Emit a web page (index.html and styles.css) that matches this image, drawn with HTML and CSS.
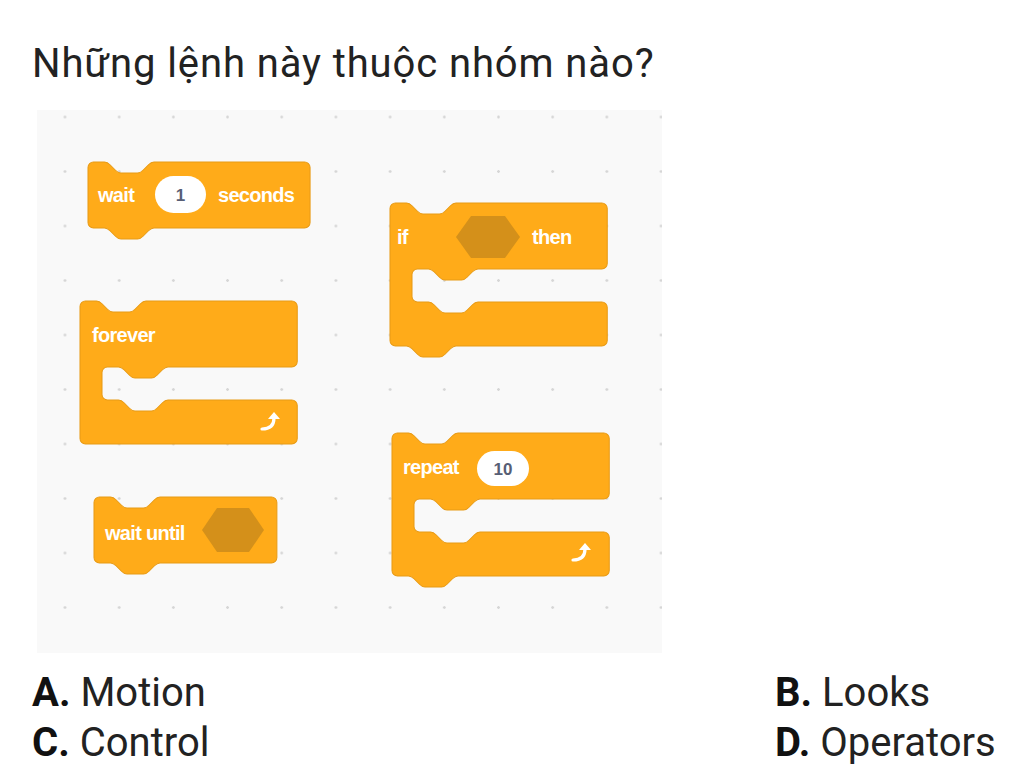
FILE: index.html
```html
<!DOCTYPE html>
<html lang="vi">
<head>
    <meta charset="utf-8" />
    <meta name="viewport" content="width=device-width, initial-scale=1.0" />
    <title>Câu hỏi Scratch</title>
    <link rel="stylesheet" href="styles.css">
</head>
<body>
    <main class="quiz">
        <h1 class="question">Những lệnh này thuộc nhóm nào?</h1>

        <!-- vùng lập trình với các khối lệnh -->
        <div class="workspace">
            <svg class="blocks" width="625" height="543" viewBox="0 0 625 543">
                <!-- wait 1 seconds -->
                <path class="block" transform="translate(51,52) scale(1.375)" d="M0,4 A4,4 0 0 1 4,0 H12 c2,0 3,1 4,2 l4,4 c1,1 2,2 4,2 h12 c2,0 3,-1 4,-2 l4,-4 c1,-1 2,-2 4,-2 H157.5 a4,4 0 0 1 4,4 V44 a4,4 0 0 1 -4,4 H48 c-2,0 -3,1 -4,2 l-4,4 c-1,1 -2,2 -4,2 h-12 c-2,0 -3,-1 -4,-2 l-4,-4 c-1,-1 -2,-2 -4,-2 H4 a4,4 0 0 1 -4,-4 Z" />
                <text class="label" x="61" y="92">wait</text>
                <rect class="input" x="118" y="66" width="51" height="37" rx="18.5" />
                <text class="value" x="143.5" y="91">1</text>
                <text class="label" x="181" y="92">seconds</text>

                <!-- if then -->
                <path class="block" transform="translate(353,93) scale(1.375)" d="M0,4 A4,4 0 0 1 4,0 H12 c2,0 3,1 4,2 l4,4 c1,1 2,2 4,2 h12 c2,0 3,-1 4,-2 l4,-4 c1,-1 2,-2 4,-2 H154 a4,4 0 0 1 4,4 V44 a4,4 0 0 1 -4,4 H64 c-2,0 -3,1 -4,2 l-4,4 c-1,1 -2,2 -4,2 h-12 c-2,0 -3,-1 -4,-2 l-4,-4 c-1,-1 -2,-2 -4,-2 H20 a4,4 0 0 0 -4,4 V68 a4,4 0 0 0 4,4 H28 c2,0 3,1 4,2 l4,4 c1,1 2,2 4,2 h12 c2,0 3,-1 4,-2 l4,-4 c1,-1 2,-2 4,-2 H154 a4,4 0 0 1 4,4 V100 a4,4 0 0 1 -4,4 H48 c-2,0 -3,1 -4,2 l-4,4 c-1,1 -2,2 -4,2 h-12 c-2,0 -3,-1 -4,-2 l-4,-4 c-1,-1 -2,-2 -4,-2 H4 a4,4 0 0 1 -4,-4 Z" />
                <text class="label" x="360" y="134">if</text>
                <polygon class="slot" points="419,127 434,106 468,106 483,127 468,148 434,148" />
                <text class="label" x="495" y="134">then</text>

                <!-- forever -->
                <path class="block" transform="translate(43,191) scale(1.375)" d="M0,4 A4,4 0 0 1 4,0 H12 c2,0 3,1 4,2 l4,4 c1,1 2,2 4,2 h12 c2,0 3,-1 4,-2 l4,-4 c1,-1 2,-2 4,-2 H154 a4,4 0 0 1 4,4 V44 a4,4 0 0 1 -4,4 H64 c-2,0 -3,1 -4,2 l-4,4 c-1,1 -2,2 -4,2 h-12 c-2,0 -3,-1 -4,-2 l-4,-4 c-1,-1 -2,-2 -4,-2 H20 a4,4 0 0 0 -4,4 V68 a4,4 0 0 0 4,4 H28 c2,0 3,1 4,2 l4,4 c1,1 2,2 4,2 h12 c2,0 3,-1 4,-2 l4,-4 c1,-1 2,-2 4,-2 H154 a4,4 0 0 1 4,4 V100 a4,4 0 0 1 -4,4 H4 a4,4 0 0 1 -4,-4 Z" />
                <text class="label" x="55" y="232">forever</text>
                <g class="loop-arrow" transform="translate(225,304)">
                    <path d="M0,15 C8,15 12,11 12,4" />
                    <polygon points="6,5 12,-2 18,5" />
                </g>

                <!-- repeat 10 -->
                <path class="block" transform="translate(355,323) scale(1.375)" d="M0,4 A4,4 0 0 1 4,0 H12 c2,0 3,1 4,2 l4,4 c1,1 2,2 4,2 h12 c2,0 3,-1 4,-2 l4,-4 c1,-1 2,-2 4,-2 H154 a4,4 0 0 1 4,4 V44 a4,4 0 0 1 -4,4 H64 c-2,0 -3,1 -4,2 l-4,4 c-1,1 -2,2 -4,2 h-12 c-2,0 -3,-1 -4,-2 l-4,-4 c-1,-1 -2,-2 -4,-2 H20 a4,4 0 0 0 -4,4 V68 a4,4 0 0 0 4,4 H28 c2,0 3,1 4,2 l4,4 c1,1 2,2 4,2 h12 c2,0 3,-1 4,-2 l4,-4 c1,-1 2,-2 4,-2 H154 a4,4 0 0 1 4,4 V100 a4,4 0 0 1 -4,4 H48 c-2,0 -3,1 -4,2 l-4,4 c-1,1 -2,2 -4,2 h-12 c-2,0 -3,-1 -4,-2 l-4,-4 c-1,-1 -2,-2 -4,-2 H4 a4,4 0 0 1 -4,-4 Z" />
                <text class="label" x="366" y="364">repeat</text>
                <rect class="input" x="440" y="341" width="52" height="35" rx="17.5" />
                <text class="value" x="466" y="365">10</text>
                <g class="loop-arrow" transform="translate(536,435)">
                    <path d="M0,15 C8,15 12,11 12,4" />
                    <polygon points="6,5 12,-2 18,5" />
                </g>

                <!-- wait until -->
                <path class="block" transform="translate(57,387) scale(1.375)" d="M0,4 A4,4 0 0 1 4,0 H12 c2,0 3,1 4,2 l4,4 c1,1 2,2 4,2 h12 c2,0 3,-1 4,-2 l4,-4 c1,-1 2,-2 4,-2 H129 a4,4 0 0 1 4,4 V44 a4,4 0 0 1 -4,4 H48 c-2,0 -3,1 -4,2 l-4,4 c-1,1 -2,2 -4,2 h-12 c-2,0 -3,-1 -4,-2 l-4,-4 c-1,-1 -2,-2 -4,-2 H4 a4,4 0 0 1 -4,-4 Z" />
                <text class="label" x="68" y="430">wait until</text>
                <polygon class="slot" points="165,420 180,398 212,398 227,420 212,442 180,442" />
            </svg>
        </div>

        <ul class="answers">
            <li><b>A.</b> Motion</li>
            <li><b>B.</b> Looks</li>
            <li><b>C.</b> Control</li>
            <li><b>D.</b> Operators</li>
        </ul>
    </main>
</body>
</html>
```

FILE: styles.css
```css
body {
    margin: 0;
    background-color: #fff;
    color: #222;
    font-family: Roboto, "Noto Sans", Arial, sans-serif;
}

.quiz {
    padding: 43px 0 0 32px;
}

.question {
    margin: 0;
    font-size: 40px;
    font-weight: 400;
    line-height: 42px;
    letter-spacing: 0.9px;
}

/* vùng lập trình có lưới chấm */
.workspace {
    width: 625px;
    height: 543px;
    margin: 25px 0 0 5px;
    background-color: #f9f9f9;
    background-image: radial-gradient(circle, #d6d6d6 1px, transparent 1.6px);
    background-size: 54.2px 54.5px;
    background-position: 0.9px -20.25px;
}
.blocks {
    display: block;
}

.block {
    fill: #ffab19;
    stroke: #e89b16;
    stroke-width: 0.75;
}
.label {
    fill: #fff;
    font-family: "Liberation Sans", Arial, sans-serif;
    font-size: 20px;
    font-weight: bold;
    letter-spacing: -0.7px;
}
.input {
    fill: #fff;
}
.value {
    fill: #575e75;
    font-family: "Liberation Sans", Arial, sans-serif;
    font-size: 17px;
    font-weight: bold;
    text-anchor: middle;
}
.slot {
    fill: #d4901a;
}
.loop-arrow path {
    fill: none;
    stroke: #fff;
    stroke-width: 3.2;
    stroke-linecap: round;
}
.loop-arrow polygon {
    fill: #fff;
}

/* đáp án */
.answers {
    list-style: none;
    margin: 15px 0 0;
    padding: 0;
    display: grid;
    grid-template-columns: 743px auto;
    font-size: 40px;
    line-height: 50px;
}
.answers b {
    font-weight: 700;
    color: #111;
}
```
